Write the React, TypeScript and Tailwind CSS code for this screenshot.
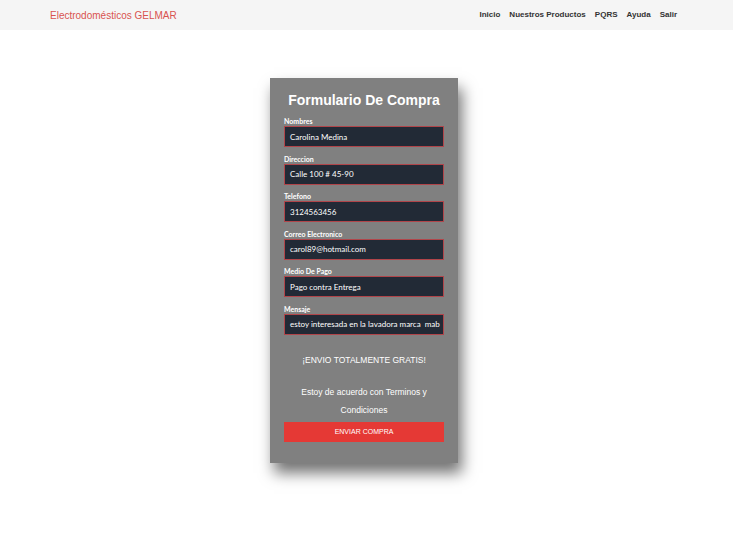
import React from "react";

const fields = [
  { label: "Nombres", value: "Carolina Medina" },
  { label: "Direccion", value: "Calle 100 # 45-90" },
  { label: "Telefono", value: "3124563456" },
  { label: "Correo Electronico", value: "carol89@hotmail.com" },
  { label: "Medio De Pago", value: "Pago contra Entrega" },
  { label: "Mensaje", value: "estoy interesada en la lavadora marca  mab" },
];

export default function App() {
  return (
    <div className="w-[733px] h-[536px] bg-white overflow-hidden" style={{ fontFamily: '"Liberation Sans", Arial, sans-serif' }}>
      <nav className="h-[30px] bg-[#f5f5f5] flex items-center justify-between pl-[50px] pr-[56px]">
        <span className="text-[10px] text-[#d9534f]">Electrodomésticos GELMAR</span>
        <div className="flex gap-[9px] text-[8px] font-bold text-[#333]">
          <span>Inicio</span>
          <span>Nuestros Productos</span>
          <span>PQRS</span>
          <span>Ayuda</span>
          <span>Salir</span>
        </div>
      </nav>
      <div className="flex justify-center pt-[48px] pr-[5px]">
        <div className="w-[188px] bg-[#808080] px-[14px] pt-[13px] pb-[21px] shadow-[4px_10px_14px_rgba(0,0,0,0.55)]">
          <h1 className="text-center text-white font-bold text-[14px] leading-[18px] mb-[8px] whitespace-nowrap -mx-[10px]">Formulario De Compra</h1>
          <div className="flex flex-col gap-[7.5px]">
            {fields.map((f) => (
              <div key={f.label} className="flex flex-col">
                <label className="text-white text-[7px] leading-[8px] font-bold mb-[1px]" style={{ fontFamily: 'Lato, sans-serif' }}>{f.label}</label>
                <div className="h-[21px] bg-[#222a36] border border-[#b0454a] flex items-center px-[5px] overflow-hidden">
                  <span className="text-white text-[8px] whitespace-pre" style={{ fontFamily: 'Lato, sans-serif' }}>{f.value}</span>
                </div>
              </div>
            ))}
          </div>
          <p className="text-center text-white text-[8.5px] mt-[19px]">¡ENVIO TOTALMENTE GRATIS!</p>
          <p className="text-center text-white text-[8.5px] leading-[18px] mt-[17px] px-[8px]">Estoy de acuerdo con Terminos y Condiciones</p>
          <button className="mt-[3px] w-full h-[20px] bg-[#e53935] text-white text-[7px] flex items-center justify-center">ENVIAR COMPRA</button>
        </div>
      </div>
    </div>
  );
}
